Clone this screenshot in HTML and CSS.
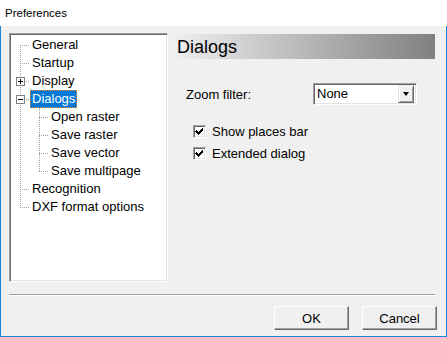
FILE: index.html
```html
<!DOCTYPE html>
<html lang="en">
<head>
  <meta charset="UTF-8">
  <title>Preferences</title>
  <link rel="stylesheet" href="styles.css">
</head>
<body>
  <div class="window">
    <div class="titlebar">Preferences</div>

    <div class="main">
      <div class="tree">
        <svg class="tree-lines" width="155" height="245" shape-rendering="crispEdges">
          <g stroke="#a0a0a0" stroke-dasharray="1 1">
            <line x1="9.5" y1="10" x2="9.5" y2="172"/>
            <line x1="9" y1="10.5" x2="19" y2="10.5"/>
            <line x1="9" y1="28.5" x2="19" y2="28.5"/>
            <line x1="9" y1="46.5" x2="19" y2="46.5"/>
            <line x1="9" y1="64.5" x2="19" y2="64.5"/>
            <line x1="9" y1="154.5" x2="19" y2="154.5"/>
            <line x1="9" y1="172.5" x2="19" y2="172.5"/>
            <line x1="28.5" y1="73" x2="28.5" y2="136"/>
            <line x1="28" y1="82.5" x2="37" y2="82.5"/>
            <line x1="28" y1="100.5" x2="37" y2="100.5"/>
            <line x1="28" y1="118.5" x2="37" y2="118.5"/>
            <line x1="28" y1="136.5" x2="37" y2="136.5"/>
          </g>
          <!-- expand / collapse boxes -->
          <rect x="5.5" y="42.5" width="8" height="8" fill="#fff" stroke="#808080"/>
          <line x1="7" y1="46.5" x2="12" y2="46.5" stroke="#000"/>
          <line x1="9.5" y1="44" x2="9.5" y2="49" stroke="#000"/>
          <rect x="5.5" y="60.5" width="8" height="8" fill="#fff" stroke="#808080"/>
          <line x1="7" y1="64.5" x2="12" y2="64.5" stroke="#000"/>
        </svg>
        <div class="node">General</div>
        <div class="node">Startup</div>
        <div class="node">Display</div>
        <div class="node"><span class="selected">Dialogs</span></div>
        <div class="node child">Open raster</div>
        <div class="node child">Save raster</div>
        <div class="node child">Save vector</div>
        <div class="node child">Save multipage</div>
        <div class="node">Recognition</div>
        <div class="node">DXF format options</div>
      </div>

      <div class="panel">
        <div class="panel-head">Dialogs</div>

        <div class="field">
          <span class="field-label">Zoom filter:</span>
          <div class="combo">
            <span class="combo-value">None</span>
            <span class="combo-btn"><span class="arrow"></span></span>
          </div>
        </div>

        <div class="checks">
          <label class="check">
            <span class="box">
              <svg width="9" height="9" viewBox="0 0 9 9" shape-rendering="crispEdges"><path d="M1 3h1v1h1v1h1v-1h1v-1h1v-1h1v-1h1v3h-1v1h-1v1h-1v1h-1v1h-1v-1h-1v-1h-1v-1h-1z" fill="#000"/></svg>
            </span>
            Show places bar
          </label>
          <label class="check">
            <span class="box">
              <svg width="9" height="9" viewBox="0 0 9 9" shape-rendering="crispEdges"><path d="M1 3h1v1h1v1h1v-1h1v-1h1v-1h1v-1h1v3h-1v1h-1v1h-1v1h-1v1h-1v-1h-1v-1h-1v-1h-1z" fill="#000"/></svg>
            </span>
            Extended dialog
          </label>
        </div>
      </div>
    </div>

    <div class="separator"></div>

    <div class="buttons">
      <button class="btn">OK</button>
      <button class="btn">Cancel</button>
    </div>
  </div>
</body>
</html>
```

FILE: styles.css
```css
* {
  box-sizing: border-box;
}

body {
  margin: 0;
  background: #fff;
  font-family: "Liberation Sans", Arial, sans-serif;
  font-size: 13px;
  color: #000;
}

.window {
  width: 447px;
  height: 337px;
  background: #f0f0f0;
  border: 1px solid #1883d7;
  border-top: none;
}

.titlebar {
  height: 26px;
  margin: 0 -1px;
  padding-left: 5px;
  background: #fff;
  font-size: 11.5px;
  line-height: 26px;
}

.main {
  display: flex;
  gap: 3px;
  padding: 7px 11px 0 8px;
}

/* tree view */
.tree {
  position: relative;
  width: 159px;
  height: 249px;
  padding-top: 2px;
  background: #fff;
  border: 1px solid;
  border-color: #a0a0a0 #fff #fff #a0a0a0;
  box-shadow: inset 1px 1px #696969, inset -1px -1px #e3e3e3;
}

.tree-lines {
  position: absolute;
  left: 1px;
  top: 1px;
}

.node {
  position: relative;
  height: 18px;
  line-height: 18px;
  padding-left: 22px;
  white-space: nowrap;
}

.node.child {
  padding-left: 41px;
}

.selected {
  display: inline-block;
  margin-left: -2px;
  padding: 0 2px;
  height: 18px;
  background: #0078d7;
  color: #fff;
  outline: 1px dotted #ff8728;
  outline-offset: -1px;
}

/* right panel */
.panel {
  flex: 1;
}

.panel-head {
  height: 25px;
  margin-top: 1px;
  padding-left: 6px;
  background: linear-gradient(to right, #f0f0f0, #808080);
  font-size: 18px;
  line-height: 26px;
}

.field {
  display: flex;
  align-items: center;
  margin-top: 24px;
  padding-left: 15px;
}

.field-label {
  width: 127px;
}

.combo {
  display: flex;
  align-items: center;
  width: 104px;
  height: 22px;
  padding: 2px;
  background: #fff;
  border: 1px solid;
  border-color: #a0a0a0 #fff #fff #a0a0a0;
  box-shadow: inset 1px 1px #696969, inset -1px -1px #e3e3e3;
}

.combo-value {
  flex: 1;
  padding-left: 1px;
  line-height: 18px;
}

.combo-btn {
  display: flex;
  align-items: center;
  justify-content: center;
  width: 16px;
  height: 18px;
  background: #f0f0f0;
  border: 1px solid;
  border-color: #e3e3e3 #696969 #696969 #e3e3e3;
  box-shadow: inset 1px 1px #fff, inset -1px -1px #a0a0a0;
}

.arrow {
  width: 0;
  height: 0;
  border-left: 3.5px solid transparent;
  border-right: 3.5px solid transparent;
  border-top: 4px solid #000;
}

.checks {
  margin-top: 15px;
  padding-left: 22px;
}

.check {
  display: flex;
  align-items: center;
  gap: 6px;
  height: 22px;
}

.box {
  display: flex;
  align-items: center;
  justify-content: center;
  width: 13px;
  height: 13px;
  background: #fff;
  border: 1px solid;
  border-color: #a0a0a0 #fff #fff #a0a0a0;
  box-shadow: inset 1px 1px #696969, inset -1px -1px #e3e3e3;
}

/* bottom */
.separator {
  height: 2px;
  margin: 12px 11px 0 8px;
  border-top: 1px solid #a0a0a0;
  border-bottom: 1px solid #fff;
}

.buttons {
  display: flex;
  justify-content: flex-end;
  gap: 13px;
  padding: 10px 9px 0 0;
}

.btn {
  width: 75px;
  height: 24px;
  padding: 0;
  background: #f0f0f0;
  font-family: "Liberation Sans", Arial, sans-serif;
  font-size: 13px;
  color: #000;
  border: 1px solid;
  border-color: #fff #696969 #696969 #fff;
  box-shadow: inset -1px -1px #a0a0a0;
}
```
